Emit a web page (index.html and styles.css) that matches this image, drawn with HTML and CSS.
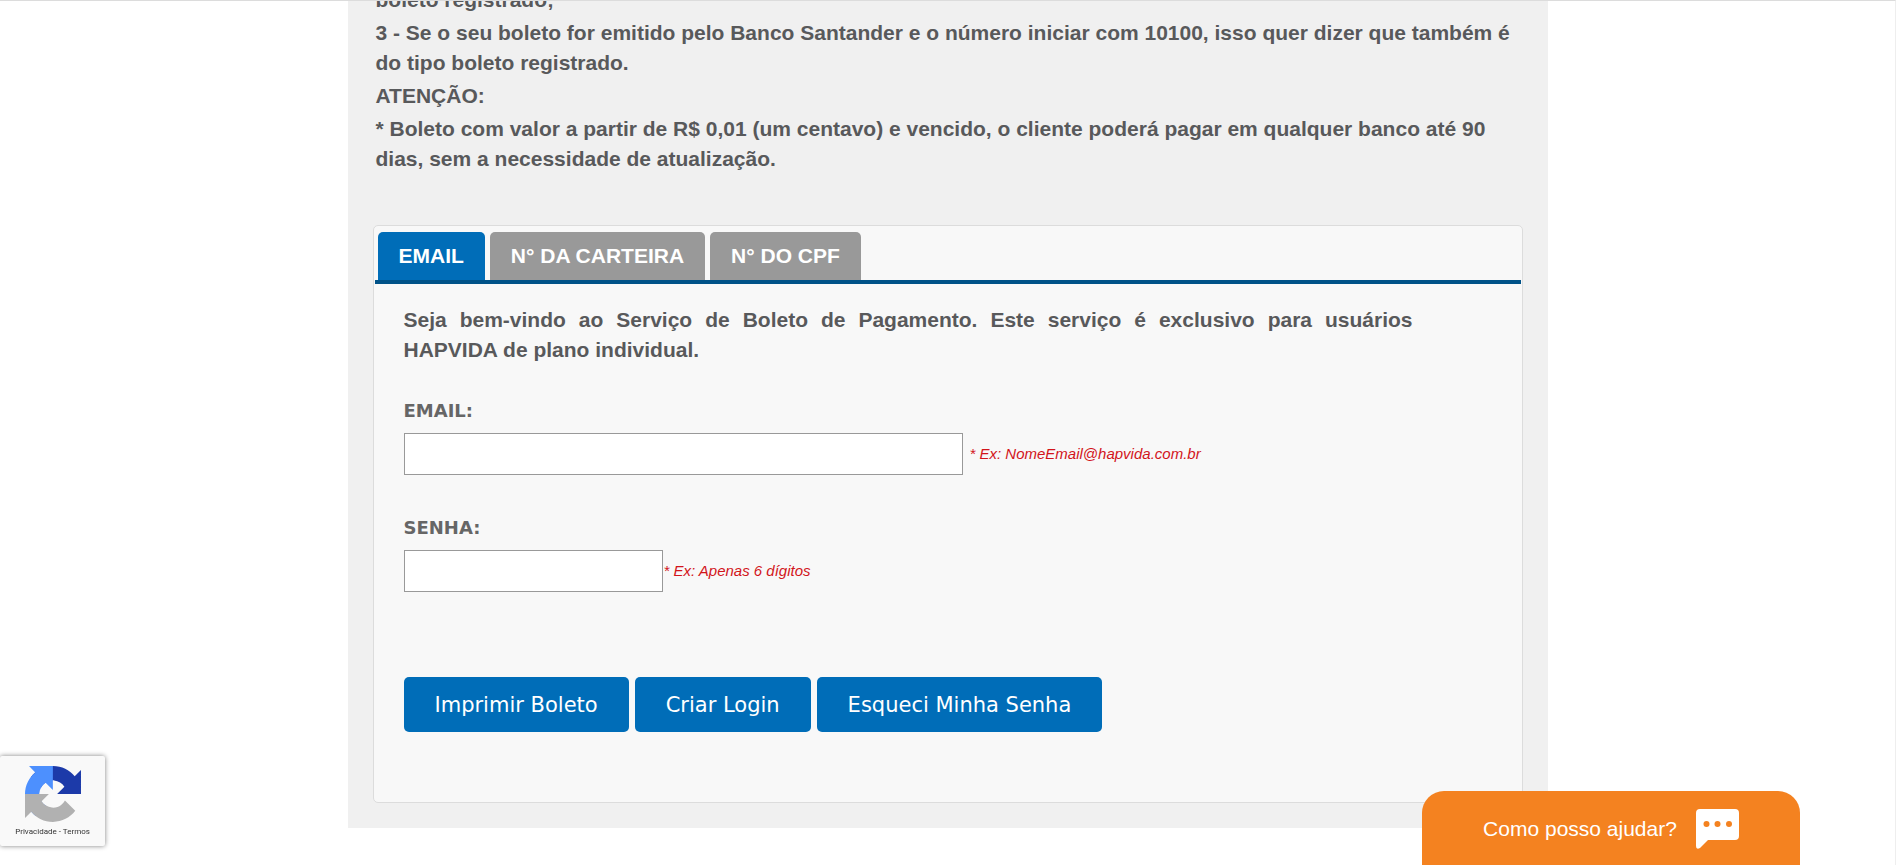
FILE: index.html
```html
<!DOCTYPE html>
<html lang="pt-BR">
<head>
<meta charset="utf-8">
<title>Boleto de Pagamento</title>
<link rel="stylesheet" href="styles.css">
</head>
<body>
<main class="page">
  <section class="notice">
    <p>boleto registrado;</p>
    <p>3 - Se o seu boleto for emitido pelo Banco Santander e o número iniciar com 10100, isso quer dizer que também é do tipo boleto registrado.</p>
    <p>ATENÇÃO:</p>
    <p>* Boleto com valor a partir de R$ 0,01 (um centavo) e vencido, o cliente poderá pagar em qualquer banco até 90 dias, sem a necessidade de atualização.</p>
  </section>
  <section class="panel">
    <nav class="tabs">
      <a class="tab active" href="#email">EMAIL</a>
      <a class="tab" href="#carteira">N° DA CARTEIRA</a>
      <a class="tab" href="#cpf">N° DO CPF</a>
    </nav>
    <form class="form">
      <p class="intro">Seja bem-vindo ao Serviço de Boleto de Pagamento. Este serviço é exclusivo para usuários HAPVIDA de plano individual.</p>
      <div class="field">
        <label for="email">EMAIL:</label>
        <div class="row row-email"><input id="email" class="input-email" type="email"><span class="hint">* Ex: NomeEmail@hapvida.com.br</span></div>
      </div>
      <div class="field">
        <label for="senha">SENHA:</label>
        <div class="row"><input id="senha" class="input-senha" type="password"><span class="hint">* Ex: Apenas 6 dígitos</span></div>
      </div>
      <div class="actions">
        <button type="submit">Imprimir Boleto</button>
        <button type="button">Criar Login</button>
        <button type="button">Esqueci Minha Senha</button>
      </div>
    </form>
  </section>
</main>
<aside class="captcha">
  <svg class="captcha-logo" viewBox="0 0 64 64" aria-hidden="true">
    <path fill="#1c3aa9" d="M64 31.955l-.033-1.370V4.687l-7.160 7.160C50.948 4.674 42.033.093 32.050.093c-10.400 0-19.622 4.960-25.458 12.640l11.736 11.860a15.550 15.550 0 0 1 4.754-5.334c2.050-1.600 4.952-2.906 8.968-2.906.485 0 .860.057 1.135.163 4.976.393 9.288 3.140 11.828 7.124l-8.307 8.307L64 31.953z"/>
    <path fill="#4d90fe" d="M31.862.094l-1.370.033H4.594l7.160 7.160C4.580 13.147 0 22.060 0 32.046c0 10.400 4.960 19.622 12.640 25.458L24.500 45.768a15.550 15.550 0 0 1-5.334-4.754c-1.600-2.050-2.906-4.952-2.906-8.968 0-.485.057-.860.163-1.135.393-4.976 3.140-9.288 7.124-11.828l8.307 8.307L31.860.095z"/>
    <path fill="#b1b1b1" d="M.001 32.045l.033 1.370v25.898l7.160-7.160c5.860 7.173 14.774 11.754 24.760 11.754 10.400 0 19.622-4.960 25.458-12.640l-11.736-11.860a15.550 15.550 0 0 1-4.754 5.334c-2.050 1.600-4.952 2.906-8.968 2.906-.485 0-.860-.057-1.135-.163-4.976-.393-9.288-3.140-11.828-7.124l8.307-8.307L0 32.044z"/>
  </svg>
  <span class="captcha-links"><a href="#privacidade">Privacidade</a> - <a href="#termos">Termos</a></span>
</aside>
<button class="chat" type="button">
  <span>Como posso ajudar?</span>
  <svg class="chat-icon" viewBox="0 0 43 40" aria-hidden="true">
    <path fill="#fff" d="M4 0h35a4 4 0 0 1 4 4v23a4 4 0 0 1-4 4H12l-8 8q-4 2-4-2V4a4 4 0 0 1 4-4z"/>
    <g fill="#f48220"><circle cx="10.500" cy="15" r="3"/><circle cx="21.500" cy="15" r="3"/><circle cx="33" cy="15" r="3"/></g>
  </svg>
</button>
</body>
</html>
```
FILE: styles.css
```css
* { box-sizing: border-box; }
html { height: 100%; }
body {
  margin: 0;
  height: 100%;
  overflow: hidden;
  border-top: 1px solid #dcdcdc;
  border-right: 1px solid #eee;
  background: #fff;
  color: #58595b;
  font-family: "Liberation Sans", Arial, sans-serif;
  font-size: 21px;
}
p { margin: 0; }
a { color: inherit; text-decoration: none; }
.page {
  max-width: 1200px;
  margin: 0 auto;
  padding: 0 25px 25px;
  background: #f0f0f0;
}
.notice {
  display: flex;
  flex-direction: column;
  gap: 3px;
  margin-top: -16px;
  padding: 0 3px;
  font-weight: bold;
  line-height: 30px;
}
.panel {
  margin-top: 51px;
  padding: 6px 1px 70px;
  border: 1px solid #dcdcdc;
  border-radius: 5px;
  background: #f8f8f8;
}
.tabs {
  display: flex;
  gap: 5px;
  padding: 0 3px;
  border-bottom: 4px solid #005288;
}
.tab {
  padding: 0 21px;
  border-radius: 5px 5px 0 0;
  background: #999;
  color: #fff;
  font-weight: bold;
  line-height: 48px;
}
.tab.active { background: #006db8; }
.form { padding: 21px 108px 0 29px; }
.intro {
  font-weight: bold;
  line-height: 30px;
  text-align: justify;
}
.field { padding-top: 34px; }
.field label {
  display: block;
  margin-bottom: 10px;
  color: #666;
  font: bold 18px/24px Verdana, "DejaVu Sans", sans-serif;
}
.row { display: flex; align-items: center; gap: 1px; }
.row-email { gap: 7px; }
.row input {
  height: 42px;
  padding: 0 10px;
  border: 1px solid #999;
  background: #fff;
  font-size: 18px;
}
.input-email { width: 559px; }
.input-senha { width: 259px; }
.field + .field { padding-top: 41px; }
.hint {
  padding-bottom: 2px;
  color: #d2151b;
  font-size: 15px;
  font-style: italic;
}
.actions { display: flex; gap: 6px; margin-top: 85px; }
.actions button {
  padding: 2px 31px 0;
  border: 0;
  border-radius: 5px;
  background: #006db8;
  color: #fff;
  font: 21px/53px Verdana, "DejaVu Sans", sans-serif;
}
.captcha {
  position: fixed;
  left: 0;
  bottom: 19px;
  display: flex;
  flex-direction: column;
  align-items: center;
  width: 105px;
  height: 90px;
  padding-top: 10px;
  border-radius: 2px;
  background: #f9f9f9;
  box-shadow: 0 0 5px #808080;
  color: #333;
}
.captcha-logo { width: 56px; height: 56px; }
.captcha-links { font: 8px/20px Roboto, sans-serif; }
.chat {
  position: fixed;
  right: 96px;
  bottom: 0;
  display: flex;
  align-items: center;
  justify-content: center;
  gap: 19px;
  width: 378px;
  height: 74px;
  padding: 2px 0 0;
  border: 0;
  border-radius: 22px 22px 0 0;
  background: #f48220;
  color: #fff;
  font: 21px "Liberation Sans", Arial, sans-serif;
}
.chat-icon { width: 43px; height: 40px; }
```
